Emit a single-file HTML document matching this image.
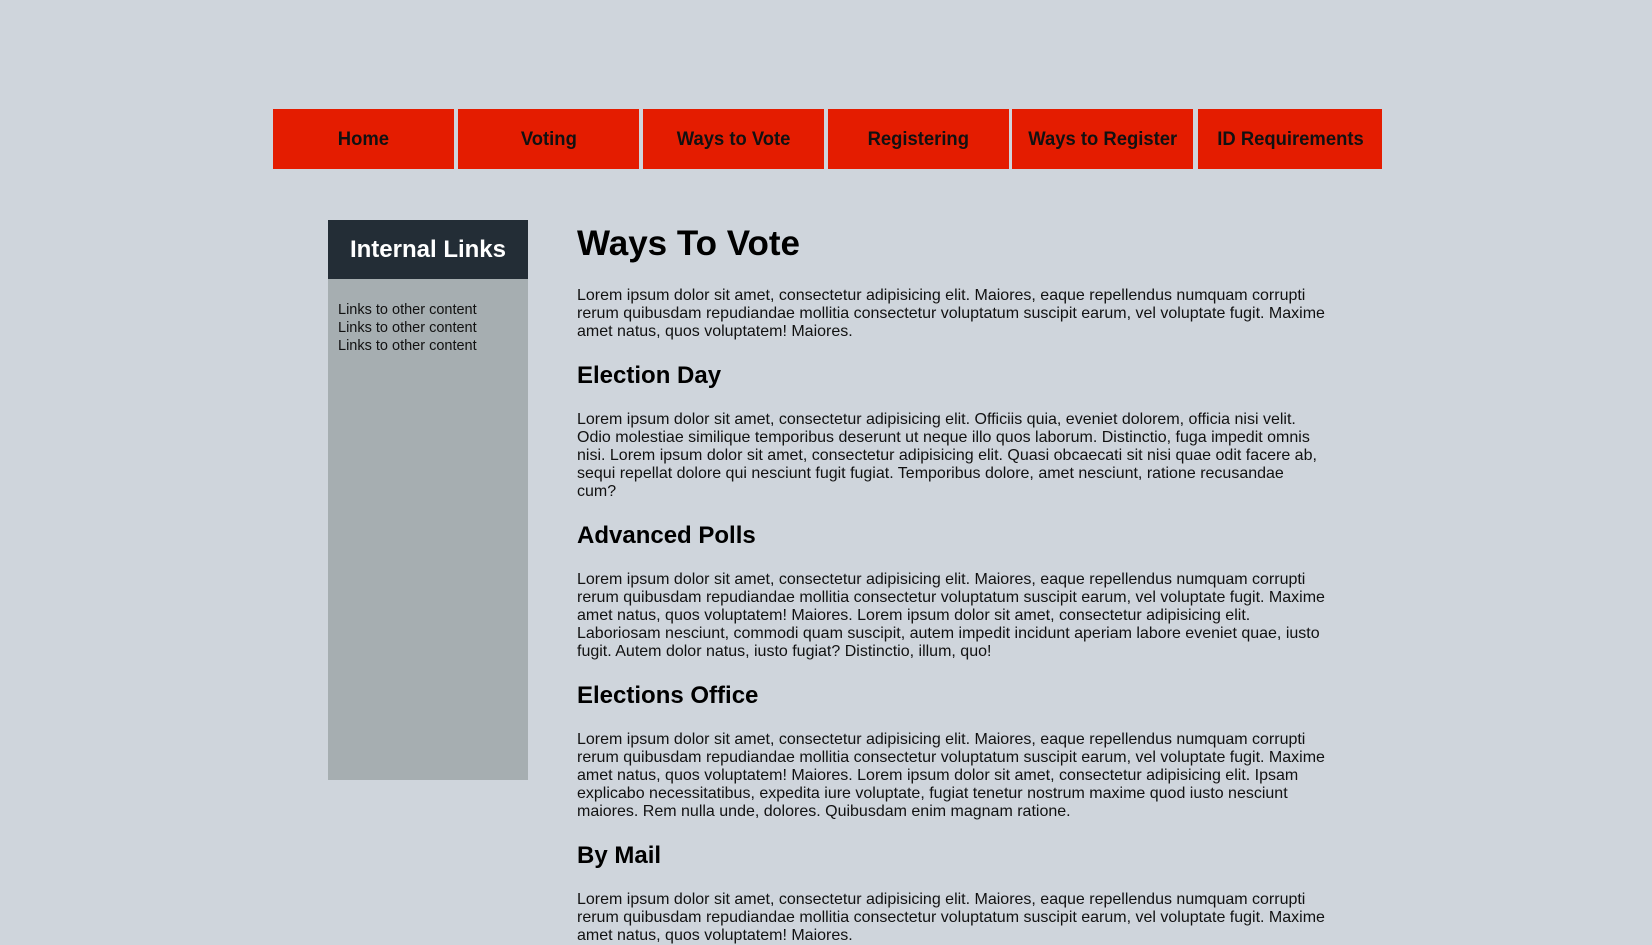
<!DOCTYPE html>
<html><head><meta charset="utf-8">
<style>
html,body{margin:0;padding:0;background:#cfd5dc;width:1652px;height:917px;overflow:hidden;font-family:"Liberation Sans",Arial,sans-serif;}
.nav{position:absolute;top:109px;left:273px;height:60px;}
.nav a{position:absolute;top:0;width:181px;height:60px;background:#e41c00;color:#111;font-family:"Liberation Sans",sans-serif;font-weight:bold;font-size:19px;line-height:62px;text-align:center;text-decoration:none;}
.nav a span{display:inline-block;transform:scaleX(0.97);white-space:nowrap;}
.side{position:absolute;left:328px;top:220px;width:200px;height:560px;background:#a6aeb1;}
.side .hd{height:59px;background:#232d36;color:#fff;font-weight:bold;font-size:24px;line-height:59px;text-align:center;}
.side .l{padding:22px 0 0 10px;font-size:14.5px;line-height:18px;color:#111;}
.main{position:absolute;left:577px;top:222px;width:800px;color:#000;white-space:nowrap;}
h1{margin:0;font-size:35px;line-height:44px;height:44px;}
h2{margin:21px 0;font-size:24px;line-height:28px;}
p{margin:0;font-size:16px;line-height:18px;color:#111;}
</style></head><body>
<div class="nav">
<a style="left:0"><span>Home</span></a>
<a style="left:185px"><span>Voting</span></a>
<a style="left:370px"><span>Ways to Vote</span></a>
<a style="left:555px"><span>Registering</span></a>
<a style="left:739px"><span>Ways to Register</span></a>
<a style="left:925px;width:184px"><span>ID Requirements</span></a>
</div>
<div class="side"><div class="hd">Internal Links</div>
<div class="l">Links to other content<br>Links to other content<br>Links to other content</div></div>
<div class="main">
<h1>Ways To Vote</h1>
<p style="margin-top:21px">Lorem ipsum dolor sit amet, consectetur adipisicing elit. Maiores, eaque repellendus numquam corrupti<br>rerum quibusdam repudiandae mollitia consectetur voluptatum suscipit earum, vel voluptate fugit. Maxime<br>amet natus, quos voluptatem! Maiores.</p>
<h2>Election Day</h2>
<p>Lorem ipsum dolor sit amet, consectetur adipisicing elit. Officiis quia, eveniet dolorem, officia nisi velit.<br>Odio molestiae similique temporibus deserunt ut neque illo quos laborum. Distinctio, fuga impedit omnis<br>nisi. Lorem ipsum dolor sit amet, consectetur adipisicing elit. Quasi obcaecati sit nisi quae odit facere ab,<br>sequi repellat dolore qui nesciunt fugit fugiat. Temporibus dolore, amet nesciunt, ratione recusandae<br>cum?</p>
<h2>Advanced Polls</h2>
<p>Lorem ipsum dolor sit amet, consectetur adipisicing elit. Maiores, eaque repellendus numquam corrupti<br>rerum quibusdam repudiandae mollitia consectetur voluptatum suscipit earum, vel voluptate fugit. Maxime<br>amet natus, quos voluptatem! Maiores. Lorem ipsum dolor sit amet, consectetur adipisicing elit.<br>Laboriosam nesciunt, commodi quam suscipit, autem impedit incidunt aperiam labore eveniet quae, iusto<br>fugit. Autem dolor natus, iusto fugiat? Distinctio, illum, quo!</p>
<h2>Elections Office</h2>
<p>Lorem ipsum dolor sit amet, consectetur adipisicing elit. Maiores, eaque repellendus numquam corrupti<br>rerum quibusdam repudiandae mollitia consectetur voluptatum suscipit earum, vel voluptate fugit. Maxime<br>amet natus, quos voluptatem! Maiores. Lorem ipsum dolor sit amet, consectetur adipisicing elit. Ipsam<br>explicabo necessitatibus, expedita iure voluptate, fugiat tenetur nostrum maxime quod iusto nesciunt<br>maiores. Rem nulla unde, dolores. Quibusdam enim magnam ratione.</p>
<h2>By Mail</h2>
<p>Lorem ipsum dolor sit amet, consectetur adipisicing elit. Maiores, eaque repellendus numquam corrupti<br>rerum quibusdam repudiandae mollitia consectetur voluptatum suscipit earum, vel voluptate fugit. Maxime<br>amet natus, quos voluptatem! Maiores.</p>
</div>
</body></html>
